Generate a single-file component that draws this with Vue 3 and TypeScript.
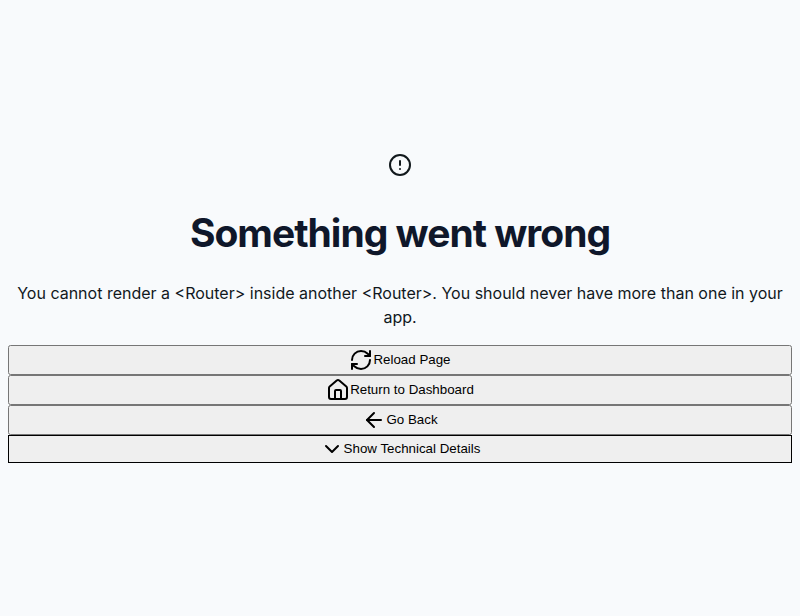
<script setup lang="ts">
import { ref } from 'vue'

interface Action {
  label: string
  icon: string[]
  run: () => void
}

const message =
  'You cannot render a <Router> inside another <Router>. You should never have more than one in your app.'

const showDetails = ref(false)

const actions: Action[] = [
  {
    label: 'Reload Page',
    icon: [
      'M3 12a9 9 0 0 1 9-9 9.75 9.75 0 0 1 6.74 2.74L21 8',
      'M21 3v5h-5',
      'M21 12a9 9 0 0 1-9 9 9.75 9.75 0 0 1-6.74-2.74L3 16',
      'M8 16H3v5',
    ],
    run: () => window.location.reload(),
  },
  {
    label: 'Return to Dashboard',
    icon: [
      'M15 21v-8a1 1 0 0 0-1-1h-4a1 1 0 0 0-1 1v8',
      'M3 10a2 2 0 0 1 .709-1.528l7-5.999a2 2 0 0 1 2.582 0l7 5.999A2 2 0 0 1 21 10v9a2 2 0 0 1-2 2H5a2 2 0 0 1-2-2z',
    ],
    run: () => window.location.assign('/'),
  },
  {
    label: 'Go Back',
    icon: ['m12 19-7-7 7-7', 'M19 12H5'],
    run: () => window.history.back(),
  },
]
</script>

<template>
  <main class="error-page">
    <svg class="alert icon" width="24" height="24" viewBox="0 0 24 24" aria-hidden="true">
      <circle cx="12" cy="12" r="10" />
      <path d="M12 8v4M12 16h.01" />
    </svg>
    <h1>Something went wrong</h1>
    <p class="message">{{ message }}</p>
    <div class="actions">
      <button v-for="action in actions" :key="action.label" type="button" @click="action.run">
        <svg class="icon" width="24" height="24" viewBox="0 0 24 24" aria-hidden="true">
          <path v-for="d in action.icon" :key="d" :d="d" />
        </svg>
        <span>{{ action.label }}</span>
      </button>
      <button class="toggle" type="button" :aria-expanded="showDetails" @click="showDetails = !showDetails">
        <svg class="icon" width="24" height="24" viewBox="0 0 24 24" aria-hidden="true">
          <path d="m6 9 6 6 6-6" />
        </svg>
        <span>Show Technical Details</span>
      </button>
    </div>
    <pre v-if="showDetails" class="details">{{ message }}</pre>
  </main>
</template>

<style>
body {
  background: #f8fafc;
}
</style>

<style scoped>
.error-page {
  box-sizing: border-box;
  min-height: 100vh;
  padding: 8px;
  display: flex;
  flex-direction: column;
  justify-content: center;
  color: #11181c;
  font: 16px/24px Inter, sans-serif;
  text-align: center;
}

.icon {
  flex: none;
  fill: none;
  stroke: currentColor;
  stroke-width: 2;
  stroke-linecap: round;
  stroke-linejoin: round;
}

.alert {
  align-self: center;
}

h1 {
  margin: 32px 0 24px;
  color: #0f172a;
  font-size: 39px;
  line-height: 48px;
  font-weight: 700;
  letter-spacing: -1px;
}

.message {
  margin: 0 0 16px;
}

.actions {
  display: flex;
  flex-direction: column;
}

button {
  display: flex;
  align-items: center;
  justify-content: center;
  line-height: 16px;
}

.toggle {
  border: 1px solid #000;
}

.details {
  margin: 16px 0 0;
  white-space: pre-wrap;
}
</style>
